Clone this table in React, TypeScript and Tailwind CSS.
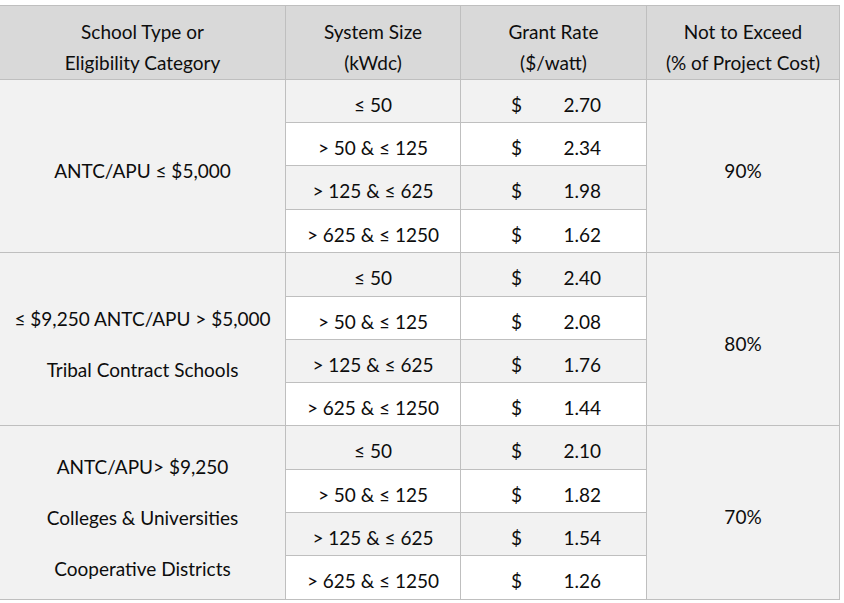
import React from "react";

type Sec = { labels: string[]; pct: string; rates: string[] };

const sizes = ["≤ 50", "> 50 & ≤ 125", "> 125 & ≤ 625", "> 625 & ≤ 1250"];

const sections: Sec[] = [
  { labels: ["ANTC/APU ≤ $5,000"], pct: "90%", rates: ["2.70", "2.34", "1.98", "1.62"] },
  {
    labels: ["≤ $9,250 ANTC/APU > $5,000", "Tribal Contract Schools"],
    pct: "80%",
    rates: ["2.40", "2.08", "1.76", "1.44"],
  },
  {
    labels: ["ANTC/APU> $9,250", "Colleges & Universities", "Cooperative Districts"],
    pct: "70%",
    rates: ["2.10", "1.82", "1.54", "1.26"],
  },
];

const headers = [
  ["School Type or", "Eligibility Category"],
  ["System Size", "(kWdc)"],
  ["Grant Rate", "($/watt)"],
  ["Not to Exceed", "(% of Project Cost)"],
];

export default function App() {
  return (
    <div className="w-[844px] h-[603px] bg-white pt-[5px] font-['Lato','Open_Sans',sans-serif]">
      <div className="grid w-[840px] gap-px bg-[#bfbfbf] pt-px pr-px pb-px text-[19px] text-[#0d0d0d] grid-cols-[285px_174px_185px_192px] grid-rows-[73px_42px_42px_43px_42px_43px_42px_42px_42px_43px_42px_42px_43px]">
        {headers.map((h) => (
          <div key={h[0]} className="bg-[#d9d9d9] flex flex-col items-center justify-center pt-[9px] leading-[31px]">
            <div>{h[0]}</div>
            <div>{h[1]}</div>
          </div>
        ))}
        {sections.map((s, si) => (
          <React.Fragment key={si}>
            <div className="row-span-4 bg-[#f2f2f2] flex flex-col items-center justify-center gap-[27px] pt-[10px] leading-[24px]">
              {s.labels.map((l) => (
                <div key={l}>{l}</div>
              ))}
            </div>
            {sizes.map((sz, i) => (
              <React.Fragment key={sz}>
                <div
                  className={`${i % 2 === 0 ? "bg-[#f2f2f2]" : "bg-white"} flex items-center justify-center pt-[8px]`}
                >
                  {sz}
                </div>
                <div
                  className={`${i % 2 === 0 ? "bg-[#f2f2f2]" : "bg-white"} flex items-center justify-between pl-[50px] pr-[45px] pt-[8px]`}
                >
                  <span>$</span>
                  <span>{s.rates[i]}</span>
                </div>
                {i === 0 && (
                  <div className="row-span-4 bg-[#f2f2f2] flex items-center justify-center pt-[10px]">{s.pct}</div>
                )}
              </React.Fragment>
            ))}
          </React.Fragment>
        ))}
      </div>
    </div>
  );
}
